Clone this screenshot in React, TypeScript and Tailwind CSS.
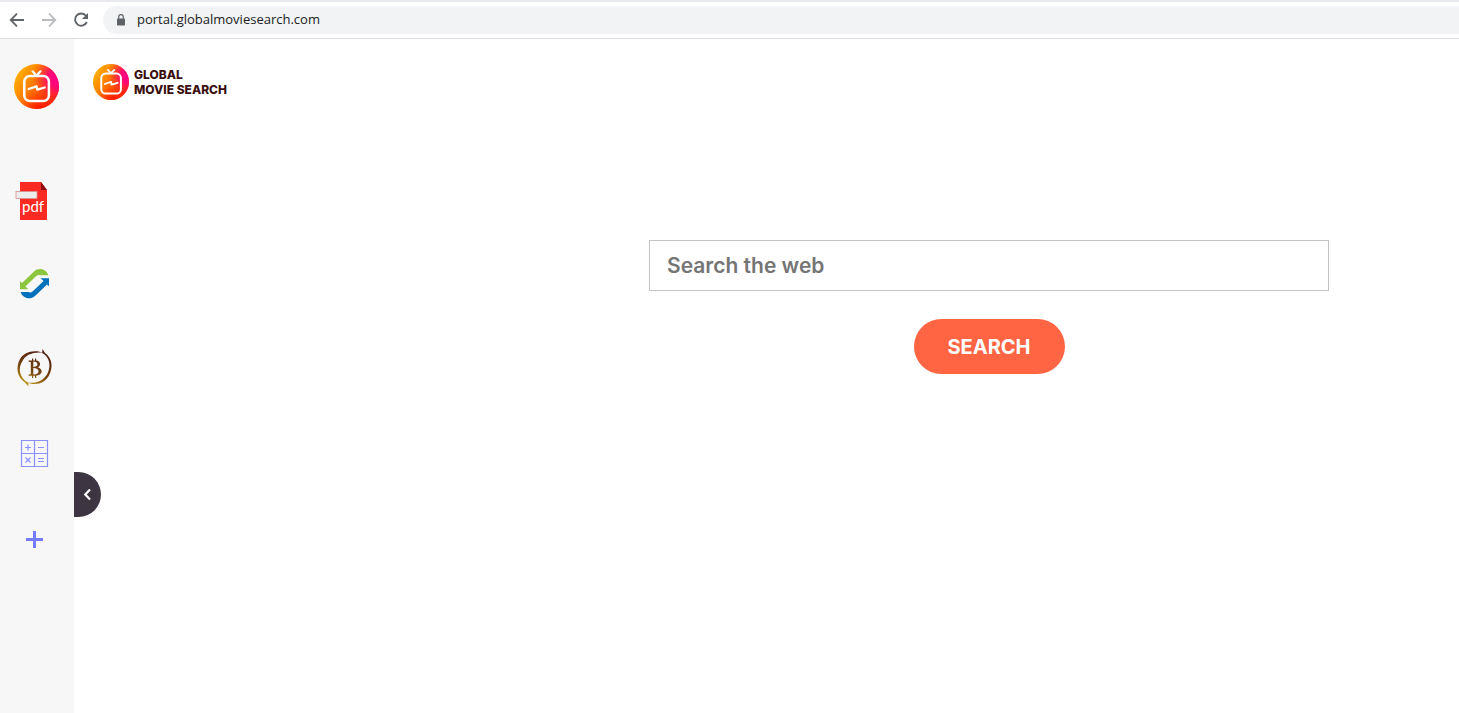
import { useId, useState } from "react";

function TvLogo({ className }: { className: string }) {
  const id = useId();

  return (
    <svg viewBox="0 0 45 45" fill="none" className={className} aria-hidden="true">
      <defs>
        <linearGradient id={`${id}-base`} x1="2" y1="14" x2="42" y2="38" gradientUnits="userSpaceOnUse">
          <stop offset="0" stopColor="#ffab00" />
          <stop offset="0.5" stopColor="#ff6a00" />
          <stop offset="1" stopColor="#ff1a10" />
        </linearGradient>
        <radialGradient id={`${id}-pink`} cx="44" cy="14" r="25" gradientUnits="userSpaceOnUse">
          <stop offset="0" stopColor="#ff0090" />
          <stop offset="0.4" stopColor="#ff0080" stopOpacity="0.85" />
          <stop offset="1" stopColor="#ff2a30" stopOpacity="0" />
        </radialGradient>
        <radialGradient id={`${id}-red`} cx="26" cy="47" r="22" gradientUnits="userSpaceOnUse">
          <stop offset="0" stopColor="#ff1000" />
          <stop offset="1" stopColor="#ff3000" stopOpacity="0" />
        </radialGradient>
      </defs>
      <circle cx="22.5" cy="22.5" r="22.5" fill={`url(#${id}-base)`} />
      <circle cx="22.5" cy="22.5" r="22.5" fill={`url(#${id}-red)`} />
      <circle cx="22.5" cy="22.5" r="22.5" fill={`url(#${id}-pink)`} />
      <g stroke="#fff" strokeLinecap="round" strokeLinejoin="round">
        <rect x="10.3" y="12" width="24.6" height="25" rx="5.5" strokeWidth="2.5" />
        <path d="m18.5 7.3 4 4.2 4-4.2" strokeWidth="2.2" />
        <path d="m14.7 25 7.8-2.7.8 3.4 7.4-2.2" strokeWidth="2.3" />
      </g>
    </svg>
  );
}

function PdfIcon() {
  return (
    <svg viewBox="0 0 60 60" className="size-[60px]" aria-hidden="true">
      <path d="M16 12h21l6 8v30H16z" fill="#fb2a22" />
      <path d="m37 12 6 8h-6z" fill="#8e0c0c" />
      <rect x="12" y="21.5" width="21" height="7" fill="#ececec" stroke="#d98f8f" strokeWidth=".8" />
      <text x="18" y="42" fontSize="15" fill="#fff" fontFamily="Lato, sans-serif">
        pdf
      </text>
    </svg>
  );
}

function ConvertIcon() {
  const arrow = "M44.3 19.3h-7.8c-1.5-.8-3-.4-4.3.8L21.4 30.400l3 2.800H16v-8l2 1.800 12-11.500c5-4.500 12.500-2.500 14.300 3.800z";

  return (
    <svg viewBox="0 0 60 60" className="size-[60px]" aria-hidden="true">
      <g transform="translate(0 1)">
        <path d={arrow} fill="#8cc63f" />
        <path d={arrow} fill="#0071bc" transform="rotate(180 30.5 27.7)" />
      </g>
    </svg>
  );
}

function BitcoinIcon() {
  const id = useId();

  return (
    <svg viewBox="0 0 60 60" className="size-[60px]" aria-hidden="true">
      <defs>
        <linearGradient id={id} x1="40" y1="10" x2="24" y2="46" gradientUnits="userSpaceOnUse">
          <stop offset="0" stopColor="#4a1712" />
          <stop offset="0.6" stopColor="#754510" />
          <stop offset="1" stopColor="#c29a1c" />
        </linearGradient>
      </defs>
      <g fill={`url(#${id})`}>
        <path d="M40 13c-10-4-20-1-24 6-4.5 8-3 18 4.500 23l4 4.500-.3-3.800c-9-5-10.500-14.500-5.700-21.700C22 14 31 11.500 40 13z" />
        <path d="m38.500 9-.3 4c8 4.500 8.800 13 5.300 20.500-4.500 8-13 11-21.500 8.500 10 4.500 19 1 23-6.500 4.500-8.500 3-17.500-4-22.500z" />
        <path
          fillRule="evenodd"
          d="M24.500 20.500H28v-2h1.200v2H31v-2h1.200v2.100c4.300.5 5.300 5 1.800 6.900 5.700 1.600 4.500 7.800-1.800 8.200V38H31v-2.300h-1.800V38H28v-2.300h-3.500v-.9l2.300-.7V22.200l-2.300-.7zm4.800 1.100v5.300c5.700.2 5.700-5.300 0-5.300zm0 6.400v6.500c7 .2 7-6.500 0-6.500z"
        />
      </g>
    </svg>
  );
}

function CalculatorIcon() {
  return (
    <svg viewBox="0 0 60 60" fill="none" stroke="#8a90ff" strokeWidth="1.2" className="size-[60px]" aria-hidden="true">
      <path d="M17.5 15.5h26v26h-26zM30.5 15.5v26M17.5 28.5h26" />
      <path d="M21 22.5h6M24 19.500v6M34 22.500h6M21.500 32.500l5 5M26.500 32.500l-5 5M34 33.500h6M34 36.500h6" />
    </svg>
  );
}

function PlusIcon() {
  return (
    <svg viewBox="0 0 60 60" stroke="#747bff" strokeWidth="3" className="size-[60px]" aria-hidden="true">
      <path d="M22 29.5h17M30.5 21v17" />
    </svg>
  );
}

const tools = [
  { label: "PDF", Icon: PdfIcon },
  { label: "Converter", Icon: ConvertIcon },
  { label: "Bitcoin", Icon: BitcoinIcon },
  { label: "Calculator", Icon: CalculatorIcon },
  { label: "Add", Icon: PlusIcon },
];

function BrowserBar() {
  return (
    <div className="flex h-[39px] items-center border-t-2 border-b border-t-[#e8eaed] border-b-[#dadce0] bg-white pl-2">
      <div className="flex gap-3.5 text-[#5f6368]">
        <button type="button" aria-label="Back">
          <svg viewBox="0 0 18 18" fill="none" stroke="currentColor" strokeWidth="1.8" className="size-[18px]">
            <path d="M16 9H3M9 2.7 2.7 9 9 15.3" />
          </svg>
        </button>
        <button type="button" aria-label="Forward" className="text-[#babcbe]">
          <svg viewBox="0 0 18 18" fill="none" stroke="currentColor" strokeWidth="1.8" className="size-[18px]">
            <path d="M2 9h13M9 2.7 15.3 9 9 15.3" />
          </svg>
        </button>
        <button type="button" aria-label="Reload">
          <svg viewBox="0 0 18 18" fill="none" stroke="currentColor" strokeWidth="1.9" className="size-[18px]">
            <path d="M14 4.8A6.1 6.1 0 1 0 14.8 11" />
            <path d="M16 2v6h-6z" fill="currentColor" stroke="none" />
          </svg>
        </button>
      </div>
      <div className="ml-[13px] flex h-7 flex-1 items-center gap-[11px] rounded-l-full bg-[#f1f3f4] pl-[13px]">
        <svg viewBox="0 0 10 12" className="h-3 w-2.5" aria-hidden="true">
          <path d="M2.7 5V3a2.3 2.3 0 0 1 4.6 0v2" fill="none" stroke="#5f6368" strokeWidth="1.2" />
          <rect x="1" y="4.5" width="8" height="7" rx=".8" fill="#5f6368" />
        </svg>
        <input
          type="text"
          aria-label="Address"
          defaultValue="portal.globalmoviesearch.com"
          className="min-w-0 flex-1 bg-transparent font-['Open_Sans',sans-serif] text-[13px] text-[#202124] outline-none"
        />
      </div>
    </div>
  );
}

export default function App() {
  const [query, setQuery] = useState("");

  return (
    <div className="flex min-h-screen flex-col bg-white">
      <BrowserBar />

      <div className="flex flex-1">
        <aside className="relative w-[74px] shrink-0 bg-[#f7f7f7] pt-[25px]">
          <a href="#" aria-label="Home" className="ml-3.5 block w-[45px]">
            <TvLogo className="size-[45px]" />
          </a>
          <nav className="mt-[61px] flex flex-col gap-[25px] pl-1">
            {tools.map(({ label, Icon }) => (
              <a key={label} href="#" aria-label={label} className="w-[60px]">
                <Icon />
              </a>
            ))}
          </nav>

          <button
            type="button"
            aria-label="Collapse sidebar"
            className="absolute top-[433px] left-full flex h-[45px] w-[27px] items-center justify-center rounded-r-full bg-[#3d3542]"
          >
            <svg viewBox="0 0 8 12" fill="none" stroke="#fff" strokeWidth="2.2" className="h-3 w-2">
              <path d="M6 .5 1.3 5.5l4.7 5" />
            </svg>
          </button>
        </aside>

        <main className="flex-1">
          <header className="flex pt-[25px] pl-[19px]">
            <a
              href="#"
              className="flex items-center gap-[5px] font-['Inter',sans-serif] text-[12px] leading-[15px] font-extrabold text-[#3a0f10]"
            >
              <TvLogo className="size-9" />
              <span>
                GLOBAL
                <br />
                MOVIE SEARCH
              </span>
            </a>
          </header>

          <form
            onSubmit={(e) => e.preventDefault()}
            className="mt-[140px] mr-[130px] ml-auto flex max-w-[680px] flex-col items-center gap-7 font-['Inter',sans-serif]"
          >
            <input
              type="text"
              aria-label="Search the web"
              placeholder="Search the web"
              value={query}
              onChange={(e) => setQuery(e.target.value)}
              className="h-[51px] w-full border border-[#c4c4c4] px-[17px] text-[21px] font-semibold text-[#333] outline-none placeholder:text-[#757575]"
            />
            <button type="submit" className="h-[55px] w-[151px] rounded-full bg-[#ff6543] text-[20px] font-bold text-white">
              SEARCH
            </button>
          </form>
        </main>
      </div>
    </div>
  );
}
